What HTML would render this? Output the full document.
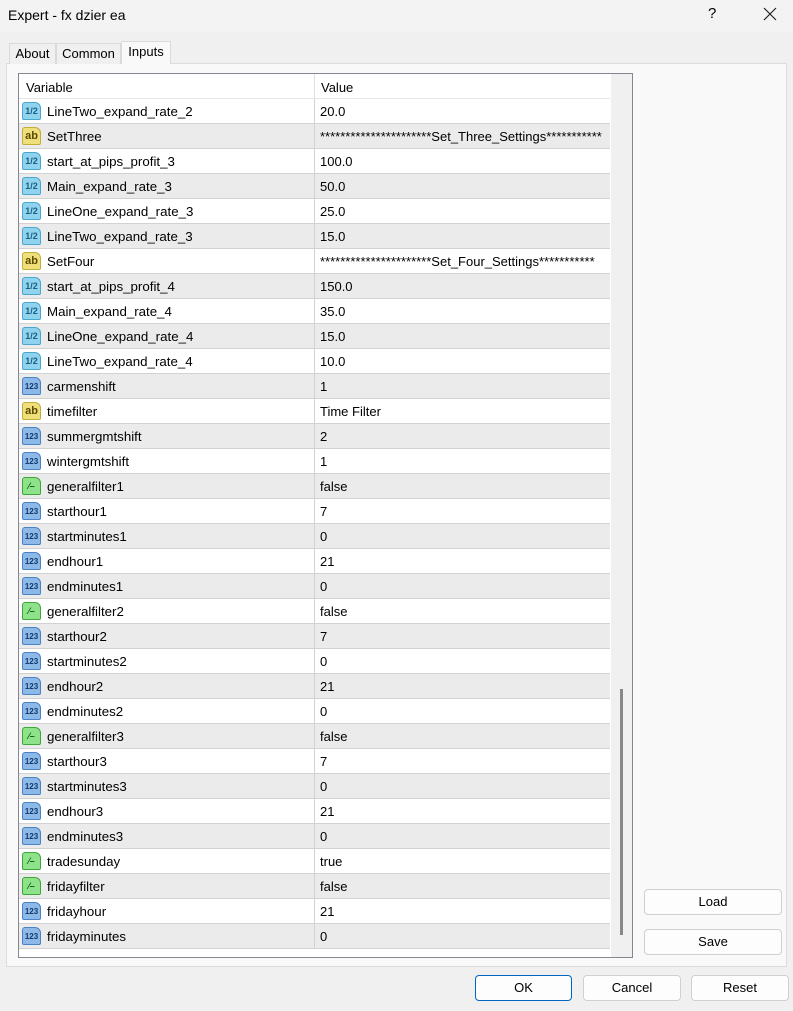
<!DOCTYPE html>
<html><head><meta charset="utf-8"><style>
*{margin:0;padding:0;box-sizing:border-box}
body{width:793px;height:1011px;background:#f0f0f0;font-family:"Liberation Sans",sans-serif;font-size:13px;color:#000;position:relative;overflow:hidden}
.abs{position:absolute}
.title{left:0;top:0;width:793px;height:32px;background:#f3f3f3}
.tab{position:absolute;top:43px;height:21px;border:1px solid #dadada;border-bottom:none;background:#f0f0f0;font-size:13px;padding-top:2px;text-align:center}
.panel{left:6px;top:63px;width:781px;height:904px;background:#f9f9f9;border:1px solid #dcdcdc}
.list{left:18px;top:73px;width:615px;height:885px;border:1px solid #828790;background:#fff;overflow:hidden}
.row{position:absolute;left:0;width:591px;height:25px;border-bottom:1px solid #d2d2d2;font-size:13.3px}
.row.g{background:#ebebeb}
.row .n{position:absolute;left:28px;top:5px}
.row .v{position:absolute;left:301px;top:5px;font-size:13px;white-space:nowrap}
.row .d{position:absolute;left:295px;top:0;width:1px;height:25px;background:#d2d2d2}
.ic{position:absolute;left:3px;top:3px;width:19px;height:18px;border-radius:3px 6px 2px 2px;font:bold 9px "Liberation Sans",sans-serif;text-align:center;line-height:17px}
.i1{background:#8fd3ee;border:1px solid #4aa6cc;color:#1b5e85}
.i2{background:#eedf7a;border:1px solid #c2ad3a;color:#5a4a00;font-size:11px}
.i3{background:#8db9e8;border:1px solid #4b82c4;color:#12386a;font-size:8px}
.i4{background:#8ee38a;border:1px solid #3ea73a;color:#145c12}
.btn{position:absolute;height:26px;border:1px solid #d0d0d0;border-radius:4px;background:#fdfdfd;text-align:center;line-height:24px;font-size:13px}
</style></head><body>
<div class="abs title"></div>
<div class="abs" style="left:8px;top:7px;font-size:14px">Expert - fx dzier ea</div>
<div class="abs" style="left:708px;top:5px;font-size:15px">?</div>
<svg class="abs" style="left:763px;top:7px" width="14" height="14"><path d="M1 1L13 13M13 1L1 13" stroke="#222" stroke-width="1.2"/></svg>
<div class="abs panel"></div>
<div class="tab" style="left:9px;width:47px">About</div>
<div class="tab" style="left:56px;width:65px">Common</div>
<div class="tab" style="left:121px;width:50px;top:41px;height:23px;background:#f9f9f9;padding-top:2px">Inputs</div>
<div class="abs list">
<div class="abs" style="left:0;top:0;width:591px;height:25px;background:#fff;border-bottom:1px solid #e5e5e5"><span class="abs" style="left:7px;top:6px">Variable</span><span class="abs" style="left:295px;top:0;width:1px;height:25px;background:#e0e0e0"></span><span class="abs" style="left:302px;top:6px">Value</span></div>
<div class="abs" style="left:592px;top:0;width:21px;height:883px;background:#f0f0f0"></div>
<div class="abs" style="left:601px;top:615px;width:3px;height:246px;background:#888"></div>
<div id="rows"></div>
</div>
<script>
var d=[["1","LineTwo_expand_rate_2","20.0"],["2","SetThree","**********************Set_Three_Settings***********"],["1","start_at_pips_profit_3","100.0"],["1","Main_expand_rate_3","50.0"],["1","LineOne_expand_rate_3","25.0"],["1","LineTwo_expand_rate_3","15.0"],["2","SetFour","**********************Set_Four_Settings***********"],["1","start_at_pips_profit_4","150.0"],["1","Main_expand_rate_4","35.0"],["1","LineOne_expand_rate_4","15.0"],["1","LineTwo_expand_rate_4","10.0"],["3","carmenshift","1"],["2","timefilter","Time Filter"],["3","summergmtshift","2"],["3","wintergmtshift","1"],["4","generalfilter1","false"],["3","starthour1","7"],["3","startminutes1","0"],["3","endhour1","21"],["3","endminutes1","0"],["4","generalfilter2","false"],["3","starthour2","7"],["3","startminutes2","0"],["3","endhour2","21"],["3","endminutes2","0"],["4","generalfilter3","false"],["3","starthour3","7"],["3","startminutes3","0"],["3","endhour3","21"],["3","endminutes3","0"],["4","tradesunday","true"],["4","fridayfilter","false"],["3","fridayhour","21"],["3","fridayminutes","0"]];
var t={"1":"1/2","2":"ab","3":"123","4":"⁄–"};var h="";
d.forEach(function(r,i){h+='<div class="row'+(i%2?' g':'')+'" style="top:'+(25+i*25)+'px"><span class="ic i'+r[0]+'">'+t[r[0]]+'</span><span class="n">'+r[1]+'</span><span class="d"></span><span class="v">'+r[2]+'</span></div>';});
document.getElementById("rows").outerHTML=h;
</script>
<div class="btn" style="left:644px;top:889px;width:138px">Load</div>
<div class="btn" style="left:644px;top:929px;width:138px">Save</div>
<div class="btn" style="left:475px;top:975px;width:97px;border-color:#0067c0">OK</div>
<div class="btn" style="left:583px;top:975px;width:98px">Cancel</div>
<div class="btn" style="left:691px;top:975px;width:98px">Reset</div>
</body></html>
